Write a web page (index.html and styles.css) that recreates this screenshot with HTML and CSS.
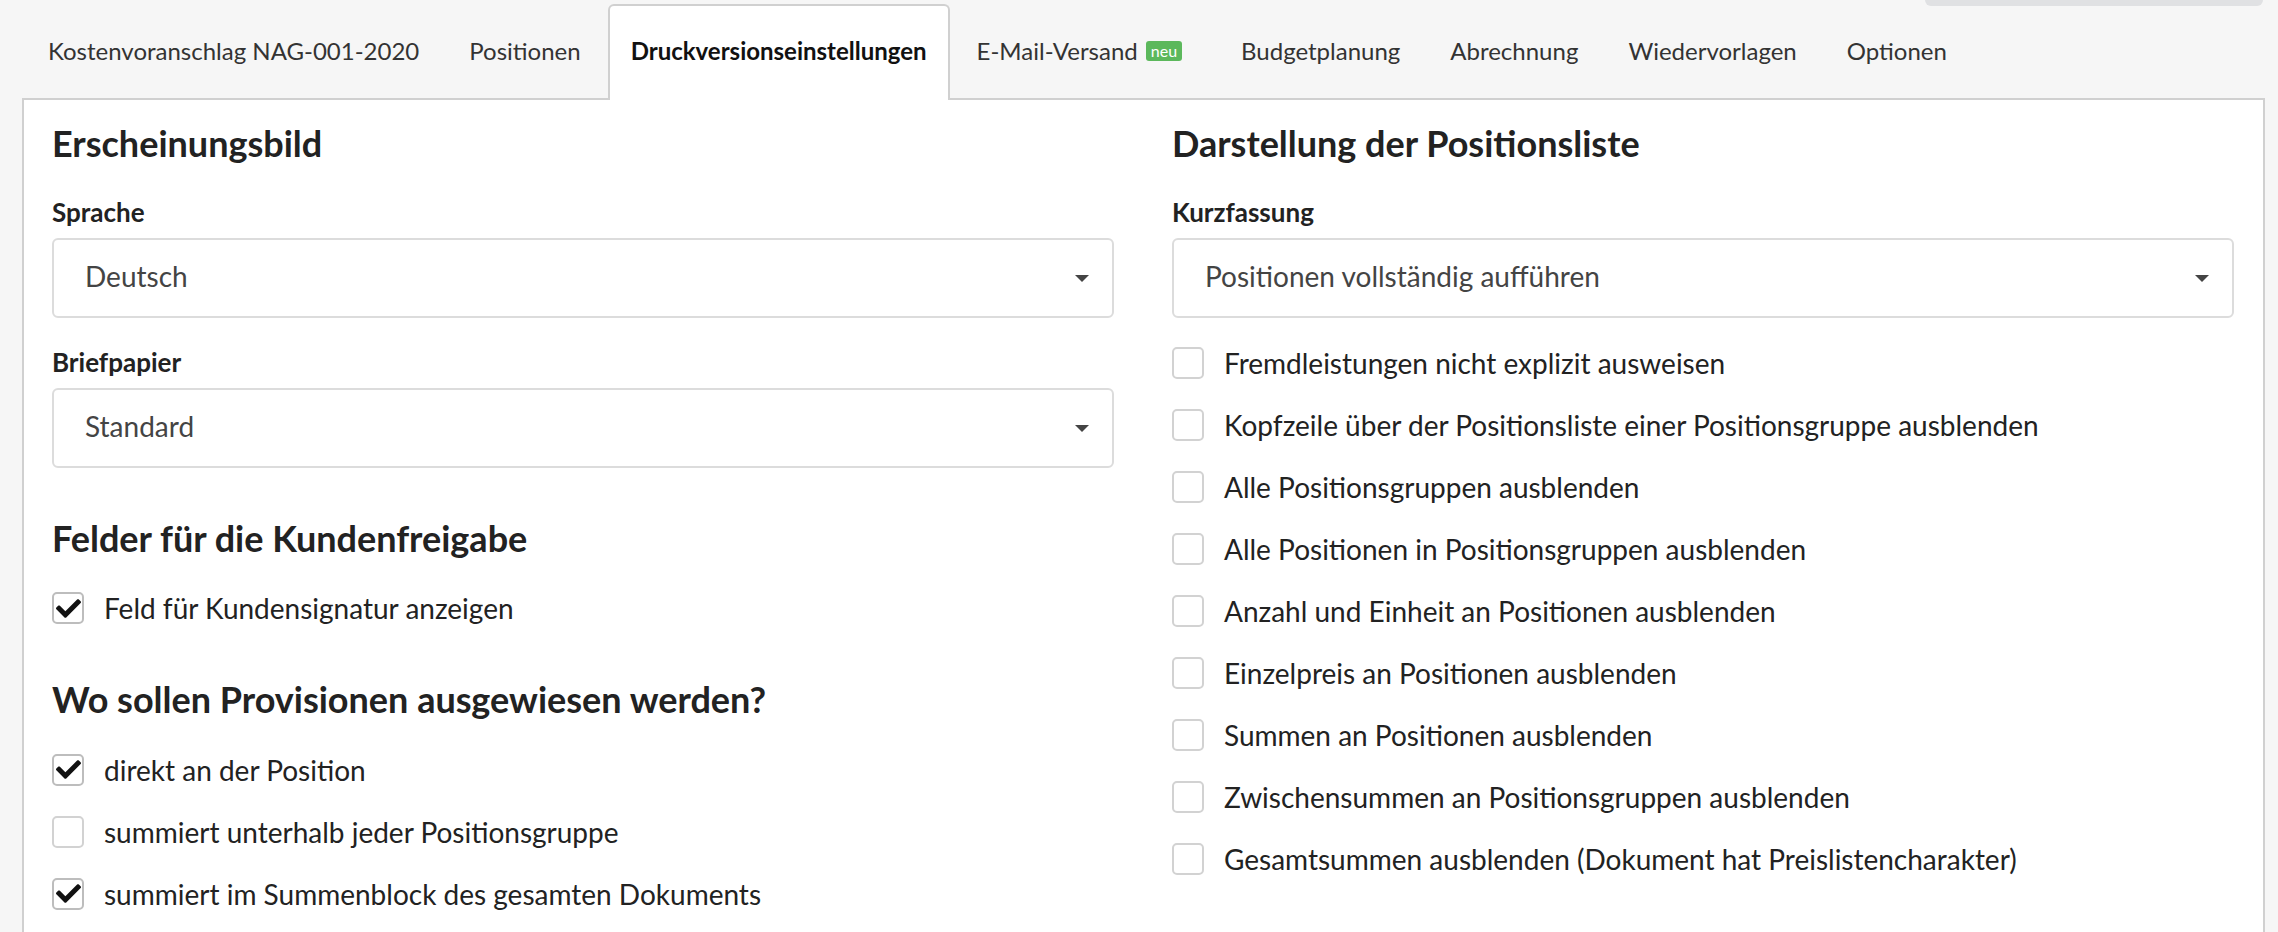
FILE: index.html
```html
<!DOCTYPE html>
<html lang="de">
<head>
<meta charset="utf-8">
<title>Druckversionseinstellungen</title>
<link rel="stylesheet" href="styles.css">
</head>
<body>
<div class="topbtn"></div>
<div class="tabbar">
  <div class="tab">Kostenvoranschlag NAG-001-2020</div>
  <div class="tab">Positionen</div>
  <div class="tab active">Druckversionseinstellungen</div>
  <div class="tab">E-Mail-Versand <span class="badge">neu</span></div>
  <div class="tab">Budgetplanung</div>
  <div class="tab">Abrechnung</div>
  <div class="tab">Wiedervorlagen</div>
  <div class="tab">Optionen</div>
</div>
<div class="panel">
  <div class="col">
    <h2>Erscheinungsbild</h2>
    <div class="group">
      <div class="label">Sprache</div>
      <div class="select"><span>Deutsch</span><i class="caret"></i></div>
    </div>
    <div class="group">
      <div class="label">Briefpapier</div>
      <div class="select"><span>Standard</span><i class="caret"></i></div>
    </div>
    <h2>Felder für die Kundenfreigabe</h2>
    <div class="checks">
      <div class="check"><span class="box on"><svg viewBox="0 0 512 512"><path d="M173.9 439.4l-166.4-166.4c-10-10-10-26.2 0-36.2l36.2-36.2c10-10 26.2-10 36.2 0L192 312.7 432.1 72.6c10-10 26.2-10 36.2 0l36.2 36.2c10 10 10 26.2 0 36.2l-294.4 294.4c-10 10-26.2 10-36.2 0z"/></svg></span>Feld für Kundensignatur anzeigen</div>
    </div>
    <h2>Wo sollen Provisionen ausgewiesen werden?</h2>
    <div class="checks">
      <div class="check"><span class="box on"><svg viewBox="0 0 512 512"><path d="M173.9 439.4l-166.4-166.4c-10-10-10-26.2 0-36.2l36.2-36.2c10-10 26.2-10 36.2 0L192 312.7 432.1 72.6c10-10 26.2-10 36.2 0l36.2 36.2c10 10 10 26.2 0 36.2l-294.4 294.4c-10 10-26.2 10-36.2 0z"/></svg></span>direkt an der Position</div>
      <div class="check"><span class="box"></span>summiert unterhalb jeder Positionsgruppe</div>
      <div class="check"><span class="box on"><svg viewBox="0 0 512 512"><path d="M173.9 439.4l-166.4-166.4c-10-10-10-26.2 0-36.2l36.2-36.2c10-10 26.2-10 36.2 0L192 312.7 432.1 72.6c10-10 26.2-10 36.2 0l36.2 36.2c10 10 10 26.2 0 36.2l-294.4 294.4c-10 10-26.2 10-36.2 0z"/></svg></span>summiert im Summenblock des gesamten Dokuments</div>
    </div>
  </div>
  <div class="col">
    <h2>Darstellung der Positionsliste</h2>
    <div class="group">
      <div class="label">Kurzfassung</div>
      <div class="select"><span>Positionen vollständig aufführen</span><i class="caret"></i></div>
    </div>
    <div class="checks">
      <div class="check"><span class="box"></span>Fremdleistungen nicht explizit ausweisen</div>
      <div class="check"><span class="box"></span>Kopfzeile über der Positionsliste einer Positionsgruppe ausblenden</div>
      <div class="check"><span class="box"></span>Alle Positionsgruppen ausblenden</div>
      <div class="check"><span class="box"></span>Alle Positionen in Positionsgruppen ausblenden</div>
      <div class="check"><span class="box"></span>Anzahl und Einheit an Positionen ausblenden</div>
      <div class="check"><span class="box"></span>Einzelpreis an Positionen ausblenden</div>
      <div class="check"><span class="box"></span>Summen an Positionen ausblenden</div>
      <div class="check"><span class="box"></span>Zwischensummen an Positionsgruppen ausblenden</div>
      <div class="check"><span class="box"></span>Gesamtsummen ausblenden (Dokument hat Preislistencharakter)</div>
    </div>
  </div>
</div>
</body>
</html>
```
FILE: styles.css
```css
html, body {
  margin: 0;
  padding: 0;
}
body {
  background: #f6f6f6;
  font-family: Lato, "Open Sans", sans-serif;
  color: #222;
  overflow: hidden;
  position: relative;
}
.topbtn {
  position: absolute;
  top: 0;
  right: 15px;
  width: 338px;
  height: 6px;
  background: #e0e1e3;
  border-radius: 0 0 6px 6px;
  z-index: 2;
}
.tabbar {
  display: flex;
  align-items: flex-end;
  height: 98px;
  padding-left: 25px;
  position: relative;
  z-index: 1;
}
.tab {
  display: flex;
  align-items: center;
  box-sizing: border-box;
  height: 96px;
  margin-bottom: -2px;
  margin-right: 4px;
  padding: 0 21px 5px;
  border: 2px solid transparent;
  border-bottom: 0;
  border-radius: 6px 6px 0 0;
  font-size: 24px;
  color: #333;
  white-space: nowrap;
}
.tab.active {
  background: #fff;
  border-color: #d0d0d0;
  font-weight: 700;
  color: #111;
}
.badge {
  display: inline-block;
  margin-left: 8px;
  margin-right: 9px;
  padding: 0 5px;
  height: 20px;
  line-height: 20px;
  font-size: 16px;
  color: #fff;
  background: #5cb85c;
  border-radius: 3px;
}
.panel {
  margin: 0 13px 0 22px;
  background: #fff;
  border: 2px solid #d0d0d0;
  padding: 2px 29px 0 28px;
  display: grid;
  grid-template-columns: 1fr 1fr;
  column-gap: 58px;
  height: 900px;
  align-items: start;
}
.col {
  display: flex;
  flex-direction: column;
}
h2 {
  margin: 20px 0 32px;
  font-size: 36px;
  line-height: 1.2;
  font-weight: 700;
  color: #222;
}
.group {
  margin-bottom: 29px;
}
.label {
  font-size: 26px;
  line-height: 30px;
  font-weight: 700;
  color: #222;
  margin-bottom: 11px;
}
.select {
  display: flex;
  align-items: center;
  justify-content: space-between;
  height: 80px;
  box-sizing: border-box;
  border: 2px solid #dcdcdc;
  border-radius: 6px;
  padding: 0 23px 4px 31px;
  font-size: 28px;
  color: #444;
}
.caret {
  width: 0;
  height: 0;
  margin-top: 4px;
  border-top: 7px solid #444;
  border-left: 7px solid transparent;
  border-right: 7px solid transparent;
}
.checks {
  display: flex;
  flex-direction: column;
  gap: 30px;
  margin-bottom: 34px;
}
.check {
  display: flex;
  align-items: center;
  font-size: 28px;
  line-height: 30px;
  color: #222;
}
.box {
  flex: none;
  width: 32px;
  height: 32px;
  box-sizing: border-box;
  border: 2px solid #d2d2d2;
  border-radius: 5px;
  margin-right: 20px;
  display: flex;
  align-items: center;
  justify-content: center;
}
.box.on {
  border-color: #bdbdbd;
}
.box svg {
  width: 25px;
  height: 25px;
  fill: #111;
}
```
